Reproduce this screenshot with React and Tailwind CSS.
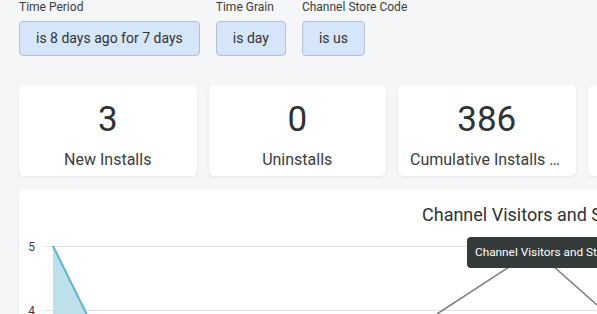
import React from 'react';

const FONT = "font-['Roboto',sans-serif]";

const filters = [
  { label: 'Time Period', value: 'is 8 days ago for 7 days' },
  { label: 'Time Grain', value: 'is day' },
  { label: 'Channel Store Code', value: 'is us' },
];

const tiles = [
  { value: '3', label: 'New Installs' },
  { value: '0', label: 'Uninstalls' },
  { value: '386', label: 'Cumulative Installs by Day' },
  { value: '12', label: 'Store Listing Visitors' },
];

function Filter({ label, value }) {
  return (
    <div className="flex flex-col items-start gap-[7px]">
      <span className="text-[12px] leading-[14px] text-[#3a3d40]">{label}</span>
      <div className="h-[35px] px-[16px] flex items-center rounded-[4px] border border-[#b6c0cd] bg-[#d7e5fb] text-[14px] text-[#2f3336] whitespace-nowrap">
        {value}
      </div>
    </div>
  );
}

function Tile({ value, label }) {
  return (
    <div className="w-[177.5px] shrink-0 h-[91px] bg-white rounded-[5px] shadow-[0_1px_3px_rgba(0,0,0,0.08)] flex flex-col items-center pt-[17px] px-[12px]">
      <div className="text-[35px] leading-[35px] text-[#2f3336]">{value}</div>
      <div className="mt-[13px] w-full text-center text-[16px] leading-[20px] text-[#3a3d40] whitespace-nowrap overflow-hidden text-ellipsis">
        {label}
      </div>
    </div>
  );
}

function Chart() {
  return (
    <div className="relative w-[640px] h-[200px] bg-white rounded-[5px] shadow-[0_1px_3px_rgba(0,0,0,0.08)]">
      <div className="pt-[14px] pl-[403px] text-[18px] leading-[24px] text-[#2f3336] whitespace-nowrap">
        Channel Visitors and Store Listing Visitors
      </div>
      {/* plot, coords relative to card (card left 19, top 189) */}
      <svg className="absolute left-0 top-0" width="640" height="200">
        <line x1="24" y1="57.5" x2="640" y2="57.5" stroke="#e3e3e3" />
        <line x1="24" y1="121.5" x2="640" y2="121.5" stroke="#e3e3e3" />
        <text x="16" y="61.5" textAnchor="end" fontSize="12" fill="#3a3d40" fontFamily="Roboto, sans-serif">5</text>
        <text x="16" y="125.5" textAnchor="end" fontSize="12" fill="#3a3d40" fontFamily="Roboto, sans-serif">4</text>
        <polygon points="34,57 72,134 34,134" fill="#bde0ea" />
        <polyline points="34,57 72,134" fill="none" stroke="#58b4cf" strokeWidth="2" />
        <polyline points="418,125 516,61 578,116" fill="none" stroke="#7d7d7d" strokeWidth="1.5" />
      </svg>
      <div className="absolute left-[448px] top-[48px] h-[31px] px-[8px] flex items-center rounded-[4px] bg-[#353a3b] text-white text-[11.8px] whitespace-nowrap">
        Channel Visitors and Store Listing Visitors
      </div>
    </div>
  );
}

export default function App() {
  return (
    <div className={`${FONT} w-[597px] h-[314px] overflow-hidden bg-[#f5f6f7] pl-[19px]`}>
      <div className="flex gap-[16px]">
        {filters.map((f) => (
          <Filter key={f.label} {...f} />
        ))}
      </div>
      <div className="mt-[29px] flex gap-[12px]">
        {tiles.map((t) => (
          <Tile key={t.label} {...t} />
        ))}
      </div>
      <div className="mt-[13px]">
        <Chart />
      </div>
    </div>
  );
}
